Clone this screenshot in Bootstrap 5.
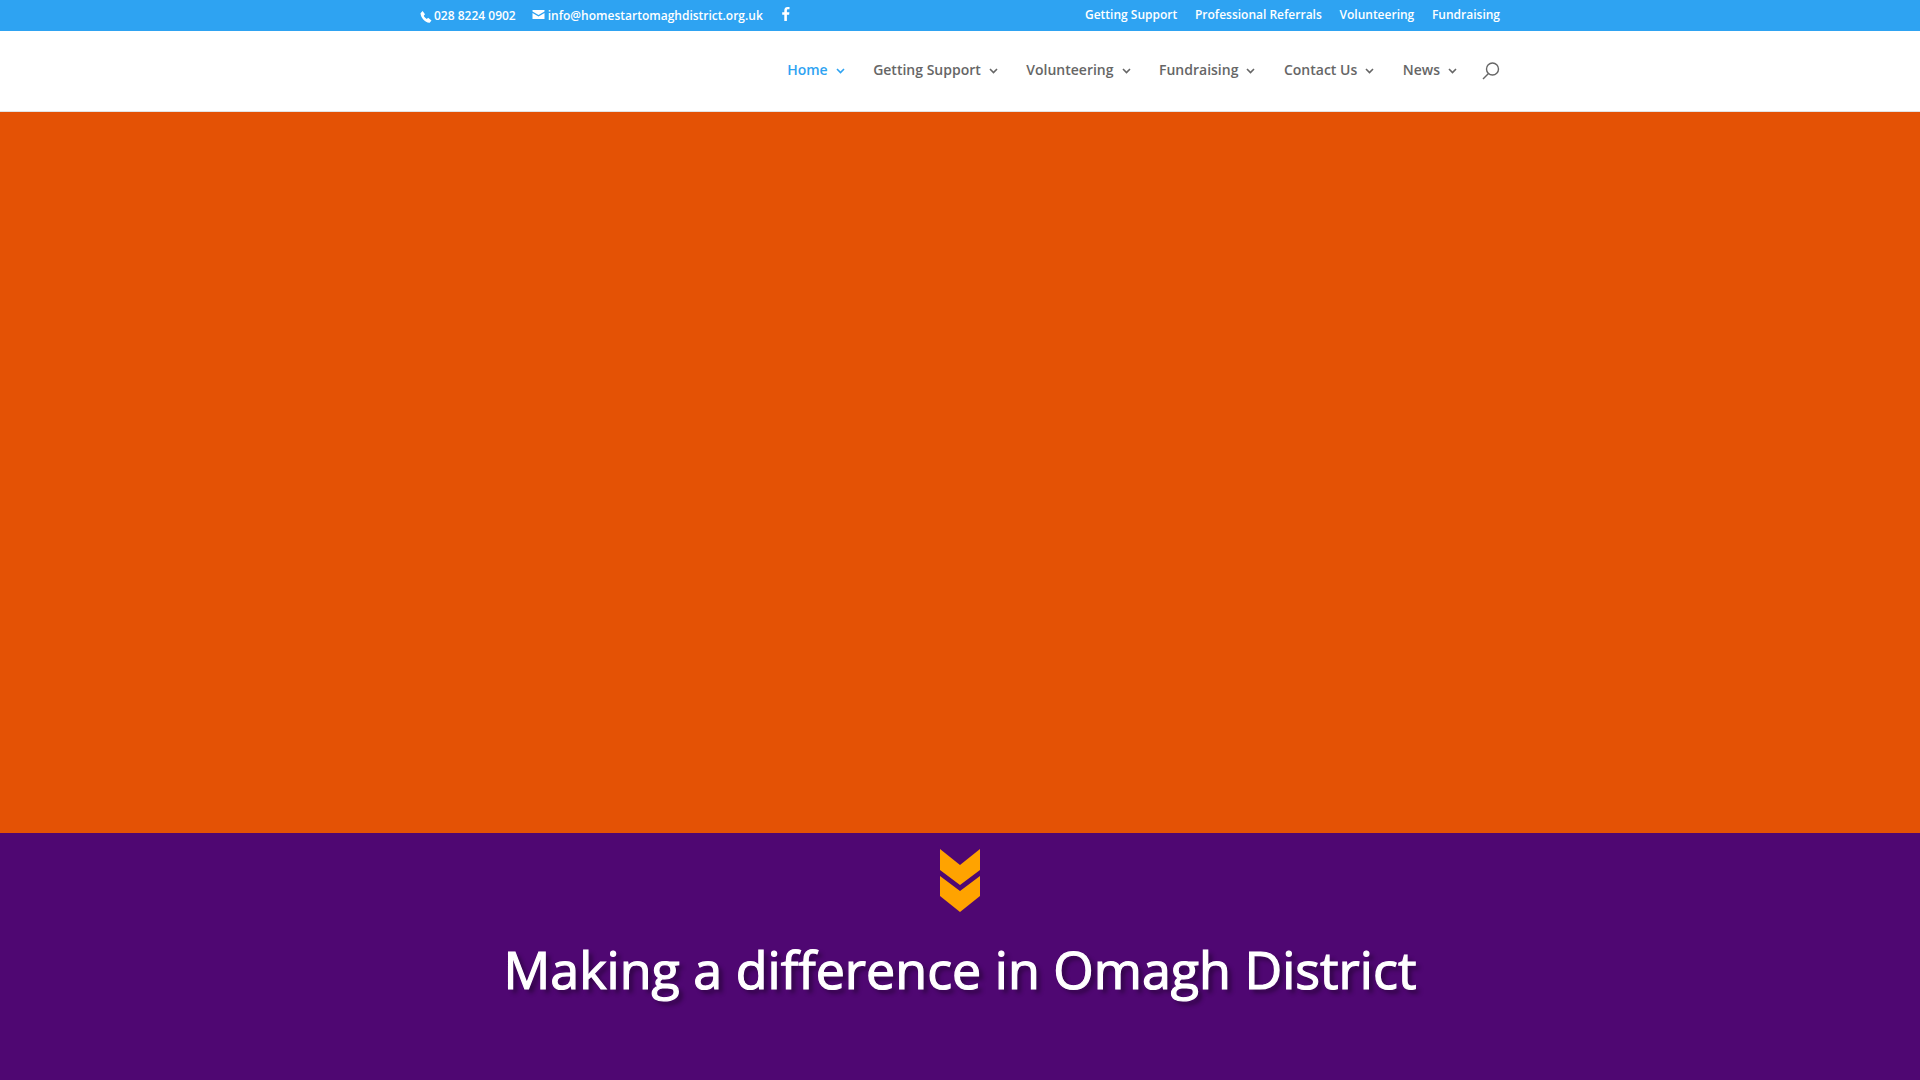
<!DOCTYPE html>
<html lang="en">
<head>
<meta charset="utf-8">
<title>Home-Start Omagh District</title>
<link href="https://cdn.jsdelivr.net/npm/bootstrap@5.3.0/dist/css/bootstrap.min.css" rel="stylesheet">
<style>
html,body{height:100%;overflow:hidden}
body{font-family:"Open Sans",sans-serif;background:#fff}
.wrap-1080{width:1080px}
.top-strip{background:#2ea3f2;height:31px;font-size:12px;font-weight:600;color:#fff;line-height:1}
.top-strip a{color:#fff;text-decoration:none}
.top-right-links{gap:17.7px;padding-bottom:2px}
.phone-ico{margin-right:1px;margin-top:1px}
.mail-link{margin-left:16px}
.mail-ico{margin-right:3px;margin-top:-2px}
.fb-link{margin-left:19px;margin-top:-3px}
.main-bar{height:81px;border-bottom:1px solid #e3e3e3;background:#fff}
.main-row{padding-bottom:2px}
.main-link{color:#666;font-size:14px;font-weight:600;text-decoration:none;line-height:1}
.main-link.is-current{color:#2ea3f2}
.chev{margin-left:8px;margin-top:2px}
.nav-gap{margin-left:28.5px}
.search-link{margin-left:25px;margin-top:2px}
.hero-orange{height:721px;background:#e45205}
.band-purple{height:247px;background:#4f0772}
.chevrons{margin-top:16px;margin-bottom:31px}
.band-title{font-size:52px;font-weight:400;color:#fff;line-height:1;font-variant-ligatures:none;-webkit-text-stroke:1.2px #fff;text-shadow:.08em .08em .08em rgba(0,0,0,.4)}
</style>
</head>
<body>
<div class="top-strip d-flex justify-content-center">
  <div class="wrap-1080 d-flex justify-content-between align-items-center">
    <div class="d-flex align-items-center">
      <svg class="phone-ico" width="13" height="13" viewBox="0 0 13 13" fill="#fff"><path d="M.5 3.200 2.600 1.100 5 4.300 3.800 5.800c.4 1.200 1.700 2.600 3 3.100l1.300-1.100 3.400 2.800-1.800 2.100C5.400 13.100.6 7.500.5 3.200z"/></svg>
      <span>028 8224 0902</span>
      <a href="#" class="mail-link d-flex align-items-center"><svg class="mail-ico" width="13" height="9" viewBox="0 0 12 9" fill="#fff"><path d="M0 0h12v1.600L6 5 0 1.600zM0 3l6 3.400L12 3v6H0z"/></svg>info@homestartomaghdistrict.org.uk</a>
      <a href="#" class="fb-link d-flex"><svg width="8" height="14" viewBox="0 0 8 14" fill="#fff"><path d="M2.300 14V7.800H.2V5.300h2.100V3.400C2.300 1.200 3.600 0 5.500 0c.9 0 1.700.1 2 .1v2.200H6.200c-1.100 0-1.300.5-1.300 1.300v1.700h2.500l-.3 2.500H4.900V14z"/></svg></a>
    </div>
    <div class="d-flex top-right-links">
      <a href="#">Getting Support</a><a href="#">Professional Referrals</a><a href="#">Volunteering</a><a href="#">Fundraising</a>
    </div>
  </div>
</div>
<div class="main-bar d-flex justify-content-center">
  <div class="wrap-1080 main-row d-flex justify-content-end align-items-center">
    <a href="#" class="main-link is-current d-flex align-items-center">Home<svg class="chev" width="9" height="6" viewBox="0 0 9 6" fill="none" stroke="currentColor" stroke-width="1.600"><path d="M1 1l3.500 3.500L8 1"/></svg></a>
    <a href="#" class="main-link d-flex align-items-center nav-gap">Getting Support<svg class="chev" width="9" height="6" viewBox="0 0 9 6" fill="none" stroke="currentColor" stroke-width="1.600"><path d="M1 1l3.500 3.500L8 1"/></svg></a>
    <a href="#" class="main-link d-flex align-items-center nav-gap">Volunteering<svg class="chev" width="9" height="6" viewBox="0 0 9 6" fill="none" stroke="currentColor" stroke-width="1.600"><path d="M1 1l3.500 3.500L8 1"/></svg></a>
    <a href="#" class="main-link d-flex align-items-center nav-gap">Fundraising<svg class="chev" width="9" height="6" viewBox="0 0 9 6" fill="none" stroke="currentColor" stroke-width="1.600"><path d="M1 1l3.500 3.500L8 1"/></svg></a>
    <a href="#" class="main-link d-flex align-items-center nav-gap">Contact Us<svg class="chev" width="9" height="6" viewBox="0 0 9 6" fill="none" stroke="currentColor" stroke-width="1.600"><path d="M1 1l3.500 3.500L8 1"/></svg></a>
    <a href="#" class="main-link d-flex align-items-center nav-gap">News<svg class="chev" width="9" height="6" viewBox="0 0 9 6" fill="none" stroke="currentColor" stroke-width="1.600"><path d="M1 1l3.500 3.500L8 1"/></svg></a>
    <a href="#" class="main-link d-flex search-link"><svg width="18" height="18" viewBox="0 0 18 18" fill="none" stroke="#666" stroke-width="1.400"><circle cx="10.500" cy="7" r="6"/><path d="M6.500 11.500 1 17"/></svg></a>
  </div>
</div>
<div class="hero-orange"></div>
<div class="band-purple d-flex flex-column align-items-center">
  <svg class="d-block chevrons" width="40" height="63" viewBox="0 0 40 63" fill="#ffa300"><path d="M0 0 20 16 40 0V21L20 36 0 21z"/><path d="M0 27 20 42 40 27V47L20 63 0 47z"/></svg>
  <h1 class="band-title m-0">Making a difference in Omagh District</h1>
</div>
</body>
</html>
